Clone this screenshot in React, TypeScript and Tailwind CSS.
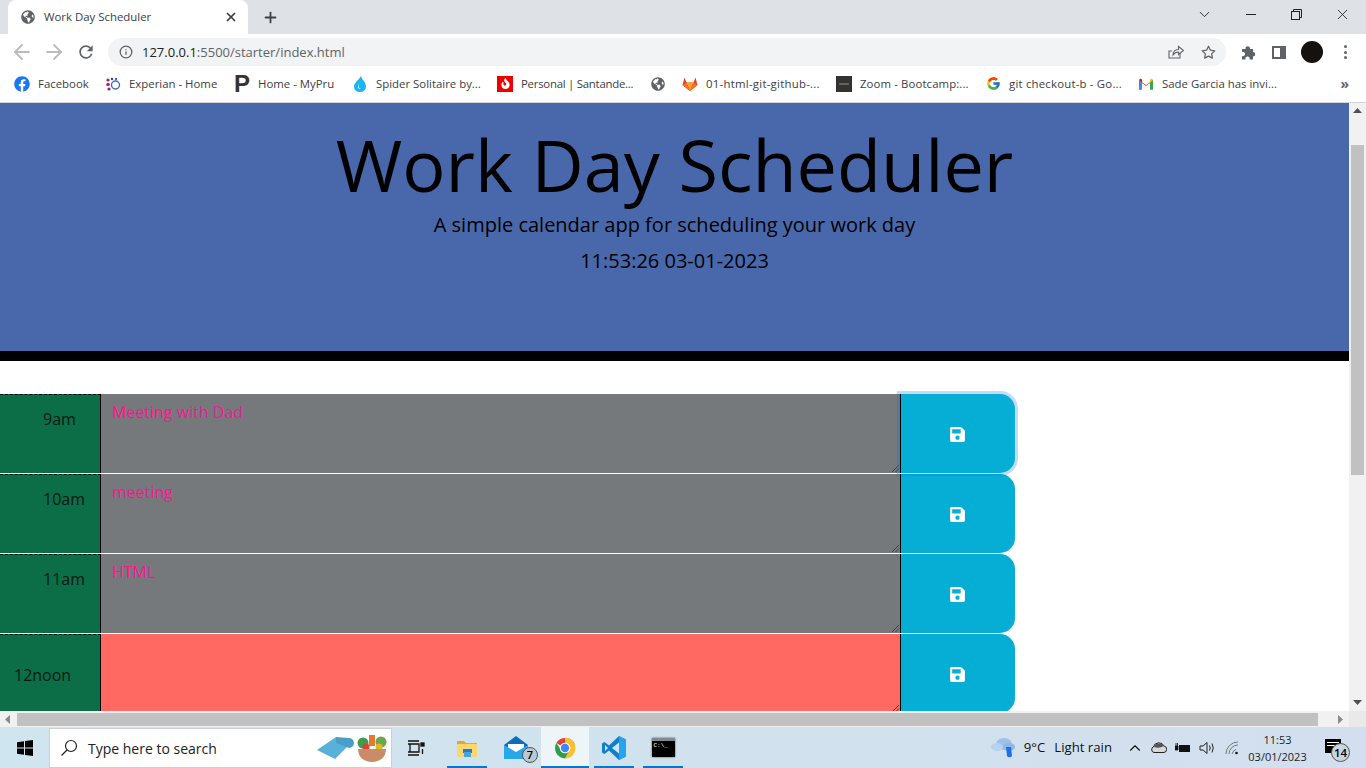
import React from "react";
import { FaFacebook, FaGlobeAmericas, FaSave, FaFire } from "react-icons/fa";
import { FcGoogle } from "react-icons/fc";
import { FiArrowLeft, FiArrowRight, FiChevronDown, FiInfo, FiStar, FiX, FiPlus, FiChevronUp } from "react-icons/fi";
import { MdRefresh } from "react-icons/md";

const Experian = () => (
  <svg width="16" height="16" viewBox="0 0 16 16">
    <circle cx="3" cy="4" r="1.6" fill="#872c8e" /><circle cx="3" cy="8.5" r="1.8" fill="#c2187d" />
    <circle cx="7" cy="3" r="1.2" fill="#5a2a8c" /><circle cx="4" cy="13" r="1.6" fill="#7b2b8f" />
    <circle cx="11" cy="3" r="1.2" fill="#2f6fb7" /><circle cx="10.5" cy="9" r="4" fill="none" stroke="#3b6fb6" strokeWidth="1.4" />
  </svg>
);
const Drop = () => (
  <svg width="16" height="16" viewBox="0 0 16 16">
    <path d="M9 0 C10 4 14 6 14 10.5 A6 5.5 0 0 1 2 10.5 C2 7 6 5 9 0Z" fill="#19b5f1" />
    <path d="M8 7 C6 9 6 12 9 13 C6 13.500 4.500 10 8 7Z" fill="#fff" />
  </svg>
);
const Santander = () => (
  <span className="w-4 h-4 bg-[#ec0000] flex items-center justify-center"><FaFire size={11} color="#fff" /></span>
);
const Gitlab = () => (
  <svg width="16" height="16" viewBox="0 0 16 16">
    <path d="M8 15 L0.500 9 L2.500 1.500 L4.500 6.500 H11.500 L13.500 1.500 L15.500 9Z" fill="#e24329" />
    <path d="M8 15 L4.500 6.500 H11.500Z" fill="#fca326" />
    <path d="M8 15 L0.500 9 L4.500 6.500Z" fill="#fc6d26" /><path d="M8 15 L15.500 9 L11.500 6.500Z" fill="#fc6d26" />
  </svg>
);
const ZoomIcon = () => (
  <span className="w-4 h-4 bg-[#333333] flex items-center justify-center"><span className="w-[10px] h-[2px] bg-[#6b6056]" /></span>
);
const Gmail = () => (
  <svg width="16" height="16" viewBox="0 0 16 16">
    <path d="M1 13.500 V4 L8 9 L15 4 V13.500 H12 V7 L8 10 L4 7 V13.500Z" fill="#ea4335" />
    <path d="M1 13.500 V4 L4 6.500 V13.500Z" fill="#4285f4" /><path d="M15 13.500 V4 L12 6.500 V13.500Z" fill="#34a853" />
    <path d="M12 6.500 L15 4 L13.500 2.500 L12 3.500Z" fill="#fbbc04" /><path d="M1 4 L2.500 2.500 L4 3.500 L4 6.500Z" fill="#c5221f" />
  </svg>
);

const bookmarks: [React.ReactNode, string, number, number, string][] = [
  [<FaFacebook size={16} color="#1877f2" />, "Facebook", 51, 14, ""],
  [<Experian />, "Experian - Home", 89, 16, ""],
  [<span className="text-[24px] leading-4 font-bold text-[#3a322d] font-['Liberation_Sans',sans-serif]">P</span>, "Home - MyPru", 78, 16, ""],
  [<Drop />, "Spider Solitaire by...", 105, 16, ""],
  [<Santander />, "Personal | Santande...", 113, 16, "tracking-[-0.25px]"],
];
const bookmarks2: [React.ReactNode, string, number, number, string][] = [
  [<Gitlab />, "01-html-git-github-...", 114, 0, "tracking-[0.25px]"],
  [<ZoomIcon />, "Zoom - Bootcamp:...", 109, 16, "tracking-[0.1px]"],
  [<FcGoogle size={15} />, "git checkout-b - Go...", 113, 16, "tracking-[0.2px]"],
  [<Gmail />, "Sade Garcia has invi...", 114, 16, ""],
];

const Bookmark = ({ icon, label, w, ml, track }: { icon: React.ReactNode; label: string; w: number; ml: number; track: string }) => (
  <div className="flex items-center gap-2 shrink-0" style={{ marginLeft: ml }}>
    <span className="w-4 h-4 flex items-center justify-center">{icon}</span>
    <span className={`text-[11.4px] text-[#3c4043] whitespace-nowrap ${track}`} style={{ width: w }}>{label}</span>
  </div>
);

const BrowserChrome = () => (
  <div className="shrink-0">
    <div className="h-[34px] bg-[#dee1e6] flex items-end relative">
      <div className="ml-2 w-[240px] h-[34px] bg-white rounded-t-lg flex items-center pl-[13px] pr-[10px]">
        <FaGlobeAmericas size={14} color="#5f6368" />
        <span className="ml-[9px] text-[11.4px] text-[#3c4043] flex-1">Work Day Scheduler</span>
        <FiX size={14} color="#3c4043" strokeWidth={3} />
      </div>
      <div className="ml-[14px] h-[34px] flex items-center"><FiPlus size={17} color="#3c4043" strokeWidth={2.5} /></div>
      <div className="ml-auto h-[28px] self-start flex items-center text-[#202124]">
        <FiChevronDown size={17} strokeWidth={1.3} className="mr-[33px]" />
        <span className="w-[10px] h-px bg-[#202124] mr-[35px]" />
        <svg width="11" height="11" viewBox="0 0 11 11" fill="none" stroke="#202124" className="mr-[32px]">
          <rect x="0.500" y="2.500" width="8" height="8" /><path d="M2.500 2.500 V0.500 H10.500 V8.500 H8.500" />
        </svg>
        <FiX size={17} strokeWidth={1.2} className="mr-[15px]" />
      </div>
    </div>
    <div className="h-[34px] pt-[2px] bg-white flex items-center">
      <FiArrowLeft size={24} color="#b9bbbe" strokeWidth={1.8} className="ml-[10px]" />
      <FiArrowRight size={24} color="#b9bbbe" strokeWidth={1.8} className="ml-[8px]" />
      <MdRefresh size={20} color="#5f6368" className="ml-[10px]" />
      <div className="ml-[12px] w-[1118px] h-[28px] rounded-full bg-[#f1f3f4] flex items-center pl-[11px] pr-[9px]">
        <FiInfo size={14} color="#5f6368" strokeWidth={2.2} />
        <span className="ml-[9px] mt-[1px] text-[13px] text-[#5f6368] whitespace-nowrap"><span className="text-[#202124]">127.0.0.1</span>:5500/starter/index.html</span>
        <svg width="16" height="16" viewBox="0 0 16 16" fill="none" stroke="#5f6368" strokeWidth="1.1" className="ml-auto mr-[17px]">
          <path d="M12 9 V14 H1 V7 H4" /><path d="M5 11 C5 7 8 5.500 10.500 5.500 V2.500 L15.500 6.500 L10.500 10.500 V8 C8.500 8 6.500 8.800 5 11Z" />
        </svg>
        <FiStar size={15} color="#5f6368" strokeWidth={2} className="mr-[1px]" />
      </div>
      <svg width="15" height="15" viewBox="0 0 15 15" className="ml-[15px]">
        <path d="M1 4 H4.500 A2.300 2.300 0 1 1 9 4 H12 V7 A2.200 2.200 0 1 1 12 11.500 V14.500 H8.500 A2.200 2.200 0 1 0 4.500 14.500 H1 V11 A2.200 2.200 0 1 0 1 7Z" fill="#5f6368" />
      </svg>
      <svg width="14" height="13" viewBox="0 0 14 13" className="ml-[16px]"><rect x="1" y="1" width="12" height="11" fill="none" stroke="#5f6368" strokeWidth="2" /><rect x="8" y="1" width="5" height="11" fill="#5f6368" /></svg>
      <span className="ml-[15px] w-[22px] h-[22px] rounded-full bg-[#141110]" />
      <span className="ml-[21px] flex flex-col gap-[2.500px]">
        <span className="w-[3px] h-[3px] rounded-full bg-[#5f6368]" />
        <span className="w-[3px] h-[3px] rounded-full bg-[#5f6368]" />
        <span className="w-[3px] h-[3px] rounded-full bg-[#5f6368]" />
      </span>
    </div>
    <div className="h-[34px] pb-[2px] bg-white flex items-center">
      {bookmarks.map(([i, l, w, m, t]) => <Bookmark key={l} icon={i} label={l} w={w} ml={m} track={t} />)}
      <span className="ml-[16px] w-4 flex justify-center"><FaGlobeAmericas size={14} color="#5f6368" /></span>
      <div className="w-[16px]" />
      {bookmarks2.map(([i, l, w, m, t]) => <Bookmark key={l} icon={i} label={l} w={w} ml={m} track={t} />)}
      <span className="ml-auto mr-[17px] text-[14px] leading-none font-bold text-[#5f6368]">»</span>
    </div>
    <div className="h-px bg-[#d3d5d8]" />
  </div>
);

const rows = [
  { h: "9am", pos: "pl-[43px] pt-[12px]", text: "Meeting with Dad", bg: "bg-[#75797b]", focus: true },
  { h: "10am", pos: "pl-[43px] pt-[12px]", text: "meeting", bg: "bg-[#75797b]", focus: false },
  { h: "11am", pos: "pl-[43px] pt-[12px]", text: "HTML", bg: "bg-[#75797b]", focus: false },
  { h: "12noon", pos: "pl-[14px] pt-[28px]", text: "", bg: "bg-[#ff6961]", focus: false },
];

const Grip = () => (
  <svg width="9" height="9" viewBox="0 0 9 9" className="absolute right-0 bottom-0" stroke="#3a3a3a" strokeWidth="0.9">
    <path d="M1 8 L8 1 M4.500 8 L8 4.500" />
  </svg>
);

const Row = ({ h, pos, text, bg, focus }: (typeof rows)[number]) => (
  <div className="flex w-[1015px] h-[80px] shrink-0 border-b border-white">
    <div className={`w-[101px] shrink-0 bg-[#0b6e47] border-t border-r border-solid [border-top-style:dashed] border-black ${pos} text-[16px] leading-6 text-[#0a1a12]`}>{h}</div>
    <div className={`relative w-[799px] shrink-0 ${bg} px-[11px] pt-[6px] text-[16px] leading-6 text-[#ff1493]`}>
      {text}
      <Grip />
    </div>
    <button className={`relative w-[115px] shrink-0 border-l border-black bg-[#06aed5] rounded-r-[15px] flex items-center justify-center ${focus ? "z-10 ring-[3px] ring-[#0d6efd40]" : ""}`}>
      <FaSave size={17} color="#fff" className="mt-[1px] mr-[1px]" />
    </button>
  </div>
);

const Arrow = ({ d }: { d: "up" | "down" | "left" | "right" }) => {
  const p = { up: "M0 6 L4.500 1 L9 6Z", down: "M0 2 L4.500 7 L9 2Z", left: "M6 0 L1 4.500 L6 9Z", right: "M2 0 L7 4.500 L2 9Z" }[d];
  return <svg width="9" height="9" viewBox="0 0 9 9"><path d={p} fill={d === "left" || d === "right" ? "#8a8a8a" : "#505050"} /></svg>;
};

const Page = () => (
  <div className="h-[608px] flex shrink-0">
    <div className="w-[1349px] shrink-0 overflow-hidden bg-white">
      <div className="h-[258px] bg-[#4868ab] border-b-[10px] border-black text-center text-black pt-[18px]">
        <h1 className="text-[72px] leading-[86px] font-normal">Work Day Scheduler</h1>
        <p className="text-[20px] leading-[30px] mt-[3px]">A simple calendar app for scheduling your work day</p>
        <p className="text-[20px] leading-[30px] mt-[6px]">11:53:26 03-01-2023</p>
      </div>
      <div className="pt-[33px] flex flex-col">
        {rows.map((r) => <Row key={r.h} {...r} />)}
      </div>
    </div>
    <div className="w-[17px] shrink-0 bg-[#f1f1f1] flex flex-col items-center">
      <div className="h-[17px] flex items-center justify-center"><Arrow d="up" /></div>
      <div className="mt-[25px] w-[13px] h-[330px] bg-[#c1c1c1]" />
      <div className="mt-auto h-[17px] flex items-center justify-center"><Arrow d="down" /></div>
    </div>
  </div>
);

const HScroll = () => (
  <div className="h-[16px] shrink-0 bg-[#f1f1f1] flex items-stretch">
    <div className="w-[17px] flex items-center justify-center"><Arrow d="left" /></div>
    <div className="w-[1301px] mt-[2px] mb-[1px] bg-[#c1c1c1]" />
    <div className="ml-[18px] w-[9px] flex items-center justify-center"><Arrow d="right" /></div>
    <div className="ml-auto w-[17px] bg-[#e9e9e9]" />
  </div>
);

const TaskSlot = ({ w, ml, on, active, children }: { w: number; ml: number; on?: boolean; active?: boolean; children: React.ReactNode }) => (
  <div className={`relative h-[41px] shrink-0 flex items-center justify-center ${active ? "bg-[#eef5f9]" : ""}`} style={{ width: w, marginLeft: ml }}>
    {children}
    {on && <span className="absolute left-0 right-0 bottom-0 h-[2px] bg-[#0078d4]" />}
  </div>
);

const Taskbar = () => (
  <div className="h-[41px] shrink-0 bg-gradient-to-r from-[#cfe5ef] to-[#d3dfee] flex items-center text-[#111]">
    <div className="w-[49px] flex justify-center">
      <svg width="16" height="16" viewBox="0 0 16 16"><path d="M0 2.300 L7 1.300 V7.500 H0Z M8 1.100 L16 0 V7.500 H8Z M0 8.500 H7 V14.700 L0 13.700Z M8 8.500 H16 V16 L8 14.900Z" fill="#000" /></svg>
    </div>
    <div className="w-[343px] h-[40px] bg-white border border-[#c9cfd3] flex items-center pl-[10px] shrink-0">
      <svg width="18" height="18" viewBox="0 0 18 18" fill="none" stroke="#222" strokeWidth="1.2"><circle cx="11" cy="7" r="5.500" /><path d="M7 11 L1.500 16.500" /></svg>
      <span className="ml-[10px] mt-[1px] text-[14px] text-[#222]">Type here to search</span>
      <svg width="38" height="26" viewBox="0 0 38 26" className="ml-auto mr-[1px]"><path d="M0 15 L19 2 L34 8 L18 24Z" fill="#58b1d9" /><path d="M19 2 L32 3 A5 5 0 0 1 32 13 L19 8Z" fill="#4a9fc9" /></svg>
      <svg width="32" height="28" viewBox="0 0 32 28" className="mr-[3px]">
        <circle cx="7" cy="9" r="5.500" fill="#3f9a52" /><circle cx="25" cy="8" r="5.500" fill="#69a84f" /><rect x="13" y="1" width="6" height="11" fill="#e8792b" /><circle cx="10" cy="13" r="3.500" fill="#d9432f" /><circle cx="23" cy="13" r="3.500" fill="#e3b81f" />
        <path d="M2 15 H30 C30 23 24 28 16 28 C8 28 2 23 2 15Z" fill="#c98b68" />
      </svg>
    </div>
    <TaskSlot w={40} ml={4}>
      <svg width="18" height="16" viewBox="0 0 18 16" fill="none" stroke="#111" strokeWidth="1.3"><path d="M1 1 H12 M1 15 H12 M3 4 V12 M1 4 H12 V12 H1" /><rect x="14" y="3" width="3" height="3" fill="#111" /><path d="M15.500 9 V14" /></svg>
    </TaskSlot>
    <TaskSlot w={40} ml={11} on>
      <svg width="22" height="20" viewBox="0 0 22 20"><path d="M1 3 H8 L10 5 H21 V8 H1Z" fill="#e3a929" /><rect x="1" y="6" width="20" height="13" rx="1" fill="#f9d66e" /><rect x="7" y="11" width="9" height="4" fill="#1e7fc4" /><rect x="8" y="14" width="7" height="5" fill="#4aa3df" /></svg>
    </TaskSlot>
    <TaskSlot w={40} ml={9}>
      <div className="relative">
        <svg width="24" height="23" viewBox="0 0 24 23"><path d="M0 9 L12 0 L24 9 V23 H0Z" fill="#0f6cbd" /><path d="M4 8 H20 V14 L12 17 L4 14Z" fill="#fff" /><path d="M0 9 L12 16 L24 9 V23 H0Z" fill="#28a8ea" /></svg>
        <span className="absolute -right-[10px] -bottom-[4px] w-4 h-4 rounded-full bg-[#b8c9d4] border border-[#555] text-[11px] leading-[14px] text-center font-semibold text-black">7</span>
      </div>
    </TaskSlot>
    <TaskSlot w={48} ml={5} on active>
      <svg width="24" height="24" viewBox="0 0 24 24">
        <path d="M12 12 L3.300 7 A10.500 10.500 0 0 1 22 8.500 H12Z" fill="#db4437" /><path d="M12 1.500 A10.500 10.500 0 0 1 22.500 12 A10.500 10.500 0 0 1 12 22.500 L17 12 L12 8Z" fill="#fbc02d" />
        <path d="M3.300 7 A10.500 10.500 0 0 0 12 22.500 L17 13 L12 16 L7.500 13Z" fill="#2e9d49" /><circle cx="12" cy="12" r="5.300" fill="#fff" /><circle cx="12" cy="12" r="4.200" fill="#4285f4" />
      </svg>
    </TaskSlot>
    <TaskSlot w={40} ml={5} on>
      <svg width="24" height="24" viewBox="0 0 24 24"><path d="M17 0 L24 3.500 V20.500 L17 24 L7 14.500 L2.500 18 L0 16.500 V7.500 L2.500 6 L7 9.500Z" fill="#0f7fcc" /><path d="M17 0 L24 3.500 V20.500 L17 24Z" fill="#2aa3ef" /><path d="M17 6.500 V17.500 L10 12Z" fill="#cfe5ef" /><path d="M3 9 V15 L6 12Z" fill="#cfe5ef" /></svg>
    </TaskSlot>
    <TaskSlot w={40} ml={9} on>
      <div className="w-[23px] h-[19px] bg-black border-t-[3px] border-[#7f8a92] shadow-[0_0_2px_#555] flex items-start pl-[2px] pt-[1px]">
        <span className="text-[6px] leading-[8px] text-white font-['Liberation_Mono',monospace]">C:\_</span>
      </div>
    </TaskSlot>
    <div className="ml-auto flex items-center shrink-0">
      <svg width="25" height="24" viewBox="0 0 25 24"><ellipse cx="13" cy="8" rx="8" ry="6" fill="#9cc2ea" /><ellipse cx="6" cy="11" rx="6" ry="4" fill="#b6d2ef" /><ellipse cx="18" cy="11" rx="6" ry="4" fill="#8fb8e6" /><path d="M15 11 L20 11 L21 20 A3 3 0 0 1 16 20Z" fill="#1f6fe5" /></svg>
      <span className="ml-[8px] text-[13.2px]">9°C</span>
      <span className="ml-[9px] text-[13.2px]">Light rain</span>
      <FiChevronUp size={18} strokeWidth={1.5} className="ml-[14px]" />
      <svg width="16" height="11" viewBox="0 0 16 11" className="ml-[7px]"><path d="M3 10.500 A3 3 0 0 1 2.500 4.800 A5.500 5 0 0 1 13 4 A3.300 3.300 0 0 1 13 10.500Z" fill="#d8d8d8" stroke="#222" /><path d="M3 5 A5.500 5 0 0 1 13 4 Q8 7 3 5Z" fill="#555" /></svg>
      <svg width="16" height="12" viewBox="0 0 16 12" className="ml-[8px]"><rect x="4" y="3" width="11" height="7" fill="#111" /><path d="M0 4 H3 V8 H0Z M1 1 V4 M2.500 1 V4" stroke="#111" fill="#111" strokeWidth="0.800" /></svg>
      <svg width="16" height="14" viewBox="0 0 16 14" fill="none" stroke="#222" className="ml-[8px]"><path d="M1 5 H4 L8 1.500 V12.500 L4 9 H1Z" /><path d="M10.500 4.500 Q12 7 10.500 9.500 M13 2.500 Q15.500 7 13 11.500" /></svg>
      <svg width="14" height="14" viewBox="0 0 14 14" fill="none" stroke="#777" className="ml-[10px]"><path d="M1 13 A12 12 0 0 1 13 1 M4 13 A9 9 0 0 1 13 4 M7 13 A6 6 0 0 1 11 8.500" /><circle cx="11.500" cy="12" r="1.300" fill="#111" stroke="none" /></svg>
      <div className="ml-[1px] w-[75px] flex flex-col items-center text-[11px] leading-[17px] text-[#222]">
        <span>11:53</span>
        <span>03/01/2023</span>
      </div>
      <div className="relative ml-[10px] mr-[25px] w-[16px] h-[14px] bg-black mb-[4px]">
        <span className="absolute left-[2px] right-[2px] top-[3px] h-px bg-white" />
        <span className="absolute left-[2px] right-[2px] top-[6px] h-px bg-white" />
        <span className="absolute left-[6px] top-[4px] w-[19px] h-[19px] rounded-full bg-[#c8d6e2] border border-[#555] text-[11.5px] leading-[17px] text-center font-semibold text-black">14</span>
      </div>
    </div>
  </div>
);

export default function App() {
  return (
    <div className="w-[1366px] h-[768px] overflow-hidden flex flex-col font-['Open_Sans',sans-serif] bg-white">
      <BrowserChrome />
      <Page />
      <HScroll />
      <Taskbar />
    </div>
  );
}
